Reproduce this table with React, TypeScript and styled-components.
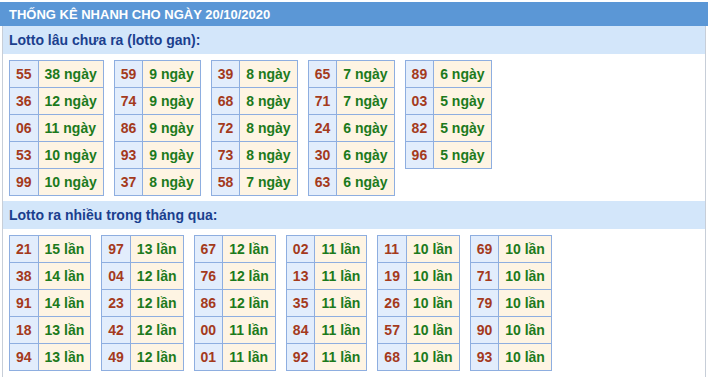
import React, { FC } from 'react';
import styled, { createGlobalStyle } from 'styled-components';

type Pair = [string, string];

const ganTables: Pair[][] = [
   [['55', '38'], ['36', '12'], ['06', '11'], ['53', '10'], ['99', '10']],
   [['59', '9'], ['74', '9'], ['86', '9'], ['93', '9'], ['37', '8']],
   [['39', '8'], ['68', '8'], ['72', '8'], ['73', '8'], ['58', '7']],
   [['65', '7'], ['71', '7'], ['24', '6'], ['30', '6'], ['63', '6']],
   [['89', '6'], ['03', '5'], ['82', '5'], ['96', '5']],
];

const hotTables: Pair[][] = [
   [['21', '15'], ['38', '14'], ['91', '14'], ['18', '13'], ['94', '13']],
   [['97', '13'], ['04', '12'], ['23', '12'], ['42', '12'], ['49', '12']],
   [['67', '12'], ['76', '12'], ['86', '12'], ['00', '11'], ['01', '11']],
   [['02', '11'], ['13', '11'], ['35', '11'], ['84', '11'], ['92', '11']],
   [['11', '10'], ['19', '10'], ['26', '10'], ['57', '10'], ['68', '10']],
   [['69', '10'], ['71', '10'], ['79', '10'], ['90', '10'], ['93', '10']],
];

const GlobalStyle = createGlobalStyle`
   body {
      margin: 0;
      padding-top: 2px;
      background: #ffffff;
      font-family: "Liberation Sans", Arial, sans-serif;
   }
`;

interface StatTableProps {
   rows: Pair[];
   unit: string;
}

const StatTable: FC<StatTableProps> = ({ rows, unit }) => (
   <Table>
      <tbody>
         {rows.map(([num, count]) => (
            <tr key={num}>
               <NumCell>{num}</NumCell>
               <CountCell>
                  {count} {unit}
               </CountCell>
            </tr>
         ))}
      </tbody>
   </Table>
);

const App: FC = () => (
   <>
      <GlobalStyle />
      <Header>THỐNG KÊ NHANH CHO NGÀY 20/10/2020</Header>
      <Box>
         <SectionTitle>Lotto lâu chưa ra (lotto gan):</SectionTitle>
         <TableRow>
            {ganTables.map((rows, i) => (
               <StatTable key={i} rows={rows} unit="ngày" />
            ))}
         </TableRow>
         <SectionTitle>Lotto ra nhiều trong tháng qua:</SectionTitle>
         <TableRow>
            {hotTables.map((rows, i) => (
               <StatTable key={i} rows={rows} unit="lần" />
            ))}
         </TableRow>
      </Box>
   </>
);

export default App;

const Header = styled.div`
   height: 24px;
   line-height: 25px;
   padding-left: 9px;
   background-color: #5b97d6;
   color: #ffffff;
   font-size: 13px;
   font-weight: bold;
`;

const Box = styled.div`
   margin: 0 2px;
   border-left: 1px solid #c7ced8;
   border-right: 1px solid #c7ced8;
   min-height: 360px;
`;

const SectionTitle = styled.div`
   height: 28px;
   line-height: 28px;
   padding-left: 6px;
   background-color: #d3e6fa;
   color: #1b3f8e;
   font-size: 14px;
   font-weight: bold;
`;

const TableRow = styled.div`
   display: flex;
   align-items: flex-start;
   gap: 10px;
   padding: 6px 6px 5px;
`;

const Table = styled.table`
   border-collapse: collapse;
   font-size: 14px;
   font-weight: bold;
`;

const Cell = styled.td`
   height: 26px;
   padding: 0 6px;
   border: 1px solid #8eaee0;
   white-space: nowrap;
`;

const NumCell = styled(Cell)`
   background-color: #e2edfc;
   color: #a43a1c;
`;

const CountCell = styled(Cell)`
   background-color: #fef4e3;
   color: #1c7a1c;
`;
